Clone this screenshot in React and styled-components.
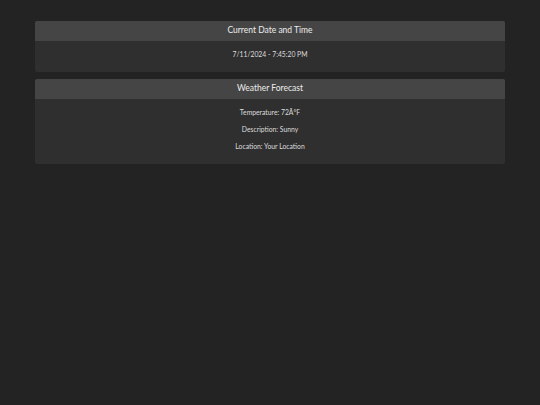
import React from 'react'
import styled, { createGlobalStyle } from 'styled-components'

const GlobalStyle = createGlobalStyle`
    html, body {
        margin: 0;
        padding: 0;
        background: #232323;
        font-family: Lato, "Noto Sans", sans-serif;
    }
`

const Page = styled.div`
    min-height: 405px;
    padding: 21px 35px;
    box-sizing: border-box;
    display: flex;
    flex-direction: column;
    gap: 7px;
`

const Card = styled.div`
    background: #2f2f2f;
    border-radius: 2px;
    overflow: hidden;
`

const Header = styled.div`
    background: #454545;
    color: #ececec;
    height: 20px;
    box-sizing: border-box;
    padding-bottom: 3px;
    display: flex;
    align-items: center;
    justify-content: center;
    font-size: 8.5px;
    line-height: 10px;
`

const Body = styled.div`
    padding: ${props => props.pad};
    display: flex;
    flex-direction: column;
    align-items: center;
    gap: 8px;
`

const Line = styled.p`
    margin: 0;
    color: #dcdcdc;
    font-size: 6.8px;
    line-height: 9px;
`

const weather = [
    "Temperature: 72Â°F",
    "Description: Sunny",
    "Location: Your Location",
]

const App = () => {
    return (
        <>
            <GlobalStyle />
            <Page>
                <Card>
                    <Header>Current Date and Time</Header>
                    <Body pad="9px 0 13px">
                        <Line>7/11/2024 - 7:45:20 PM</Line>
                    </Body>
                </Card>
                <Card>
                    <Header>Weather Forecast</Header>
                    <Body pad="9px 0 13px">
                        {weather.map((w, i) => (
                            <Line key={i}>{w}</Line>
                        ))}
                    </Body>
                </Card>
            </Page>
        </>
    )
}

export default App
